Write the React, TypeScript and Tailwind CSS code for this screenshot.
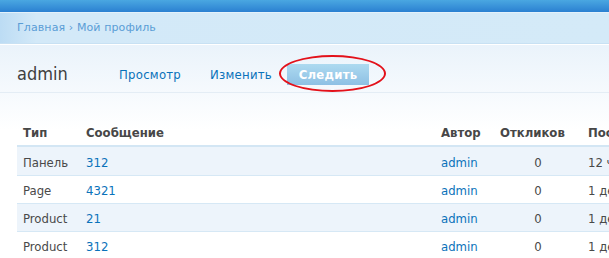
const rows = [
  { type: "Панель", msg: "312", author: "admin", replies: "0", last: "12 ч 5 мин назад", h: "h-[29px]" },
  { type: "Page", msg: "4321", author: "admin", replies: "0", last: "1 день назад", h: "h-[28px]" },
  { type: "Product", msg: "21", author: "admin", replies: "0", last: "1 день назад", h: "h-[28px]" },
  { type: "Product", msg: "312", author: "admin", replies: "0", last: "1 день назад", h: "h-[28px]" },
];

const cols = "grid grid-cols-[63px_355px_59px_88px_140px]";

export default function App() {
  return (
    <div
      className="w-[609px] h-[258px] overflow-hidden text-[#494949] bg-white"
      style={{ fontFamily: '"DejaVu Sans Condensed", "DejaVu Sans", sans-serif', fontStretch: "condensed" }}
    >
      {/* Top bar */}
      <div className="h-[12px] bg-gradient-to-b from-[#4aa7e1] to-[#2b80d1]" />
      <div className="h-px bg-[#e3f1fb]" />

      {/* Breadcrumb */}
      <div className="h-[31px] flex items-center pl-[17px] bg-gradient-to-r from-[#bcdcf4] via-[#d3e9f8] via-[6%] to-[#d4eaf8] border-b border-[#c8e1f3]">
        <span
          className="text-[11px] tracking-[0.1px] text-[#5a9dd6] mt-[1px]"
          style={{ fontFamily: '"DejaVu Sans", sans-serif', fontStretch: "normal" }}
        >
          Главная › Мой профиль
        </span>
      </div>
      <div className="h-px bg-white" />

      {/* Page */}
      <div className="bg-gradient-to-b from-[#eaf3fb] to-white to-[85px]">
        <div className="h-[48px] flex items-center pt-[12px] pl-[17px] border-b border-[#e4edf5]">
          <h1 className="w-[102px] text-[18px] leading-none text-[#404040] -mt-[1px]">admin</h1>
          <nav className="flex items-center text-[13px] tracking-[0.25px] text-[#0a72ba]">
            <a className="w-[91px]">Просмотр</a>
            <a className="w-[77px]">Изменить</a>
            <div className="relative">
              <a className="flex items-center justify-center w-[82px] h-[21px] bg-gradient-to-b from-[#addaf0] to-[#8ec0e4] text-white font-bold">
                Следить
              </a>
              <div className="absolute left-[-8px] top-[-9px] w-[107px] h-[37px] rounded-[50%] border-2 border-[#e3111a]" />
            </div>
          </nav>
        </div>

        {/* Table */}
        <div className="pl-[17px] pt-[24px] text-[13px]">
          <div className={`${cols} h-[30px] pt-[3px] items-center font-bold border-b-2 border-[#d3e6f4] text-[#474747]`}>
            <div className="pl-[6px]">Тип</div>
            <div className="pl-[6px]">Сообщение</div>
            <div className="pl-[6px]">Автор</div>
            <div className="pl-[6px]">Откликов</div>
            <div className="pl-[6px] whitespace-nowrap">Последний</div>
          </div>
          {rows.map((r, i) => (
            <div
              key={i}
              className={`${cols} ${r.h} pt-[3px] items-center border-b border-[#d6e8f5] ${i % 2 === 0 ? "bg-[#edf4fb]" : "bg-white"}`}
            >
              <div className="pl-[6px]">{r.type}</div>
              <div className="pl-[6px] text-[#0a72ba]">{r.msg}</div>
              <div className="pl-[6px] text-[#0a72ba]">{r.author}</div>
              <div className="text-center">{r.replies}</div>
              <div className="pl-[6px] whitespace-nowrap">{r.last}</div>
            </div>
          ))}
        </div>
      </div>
    </div>
  );
}
